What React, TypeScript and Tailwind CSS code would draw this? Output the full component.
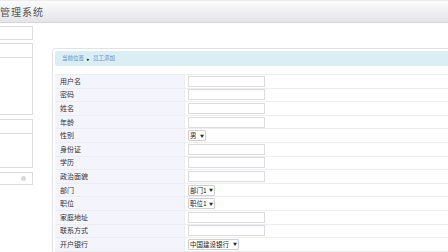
import React from "react";

type Field = { label: string; kind: "input" | "select"; value?: string; w?: string };

const fields: Field[] = [
  { label: "用户名", kind: "input" },
  { label: "密码", kind: "input" },
  { label: "姓名", kind: "input" },
  { label: "年龄", kind: "input" },
  { label: "性别", kind: "select", value: "男", w: "w-[18px]" },
  { label: "身份证", kind: "input" },
  { label: "学历", kind: "input" },
  { label: "政治面貌", kind: "input" },
  { label: "部门", kind: "select", value: "部门1", w: "w-[27px]" },
  { label: "职位", kind: "select", value: "职位1", w: "w-[27px]" },
  { label: "家庭地址", kind: "input" },
  { label: "联系方式", kind: "input" },
  { label: "开户银行", kind: "select", value: "中国建设银行", w: "w-[51px]" },
];

export default function App() {
  return (
    <div
      className="w-[448px] h-[252px] overflow-hidden bg-white text-[#333]"
      style={{ fontFamily: '"Noto Sans CJK SC", "Noto Sans", sans-serif' }}
    >
      {/* Header */}
      <div className="h-[23px] border-t border-[#ececec] border-b border-b-[#d6d5da] bg-gradient-to-b from-[#fbfbfb] to-[#e4e3e7] flex items-center">
        <span className="text-[10px] leading-none text-[#555] tracking-[1px] pt-[1px]">管理系统</span>
      </div>

      <div className="flex">
        {/* Sidebar */}
        <div className="w-[33px] shrink-0 overflow-hidden flex flex-col">
          <div className="ml-[-10px] mt-[3px] h-[14px] border border-[#dcdcdc] bg-white" />
          <div className="ml-[-10px] mt-[3px] h-[72px] border border-[#dcdcdc] bg-white flex flex-col">
            <div className="h-[14px] border-b border-[#dcdcdc]" />
          </div>
          <div className="ml-[-10px] mt-[4px] h-[49px] border border-[#dcdcdc] bg-white flex flex-col">
            <div className="h-[14px] border-b border-[#dcdcdc]" />
          </div>
          <div className="ml-[-10px] mt-[4px] h-[13px] border border-[#dcdcdc] bg-white flex items-center justify-end pr-[6px]">
            <div className="w-[5px] h-[5px] rounded-full bg-[#d8d8d8] flex items-center justify-center text-[4px] leading-none text-white">›</div>
          </div>
        </div>

        {/* Main */}
        <div className="flex-1 ml-[19px] mt-[25px] min-w-0">
          <div className="w-[420px] border border-[#e2e2e6] rounded-[3px] p-[2px] h-[300px]">
            <div className="h-[15px] bg-[#dbeef6] rounded-[2px] flex items-center pl-[7px] text-[5.5px] text-[#5b8fc4] gap-[3px]">
              <span>当前位置</span>
              <span className="text-[#222] text-[5px]">▸</span>
              <span>员工添加</span>
            </div>
            <div className="mt-[8px] border-t border-[#ececf2]">
              {fields.map((f) => (
                <div key={f.label} className="flex h-[13.6px] border-b border-[#ececf2]">
                  <div className="w-[130px] shrink-0 bg-[#f4f4fc] border-r border-[#ececf2] pl-[5px] flex items-center text-[7px] leading-none text-[#333]">
                    {f.label}
                  </div>
                  <div className="flex-1 flex items-center pl-[3px]">
                    {f.kind === "input" ? (
                      <div className="w-[77px] h-[11px] border border-[#dcdcdc] bg-white" />
                    ) : (
                      <div className={`${f.w} h-[11px] border border-[#cfcfcf] bg-white rounded-[1px] flex items-center justify-between px-[1px] text-[6.5px] leading-none text-[#222]`}>
                        <span>{f.value}</span>
                        <span className="text-[4px]">▼</span>
                      </div>
                    )}
                  </div>
                </div>
              ))}
            </div>
          </div>
        </div>
      </div>
    </div>
  );
}
